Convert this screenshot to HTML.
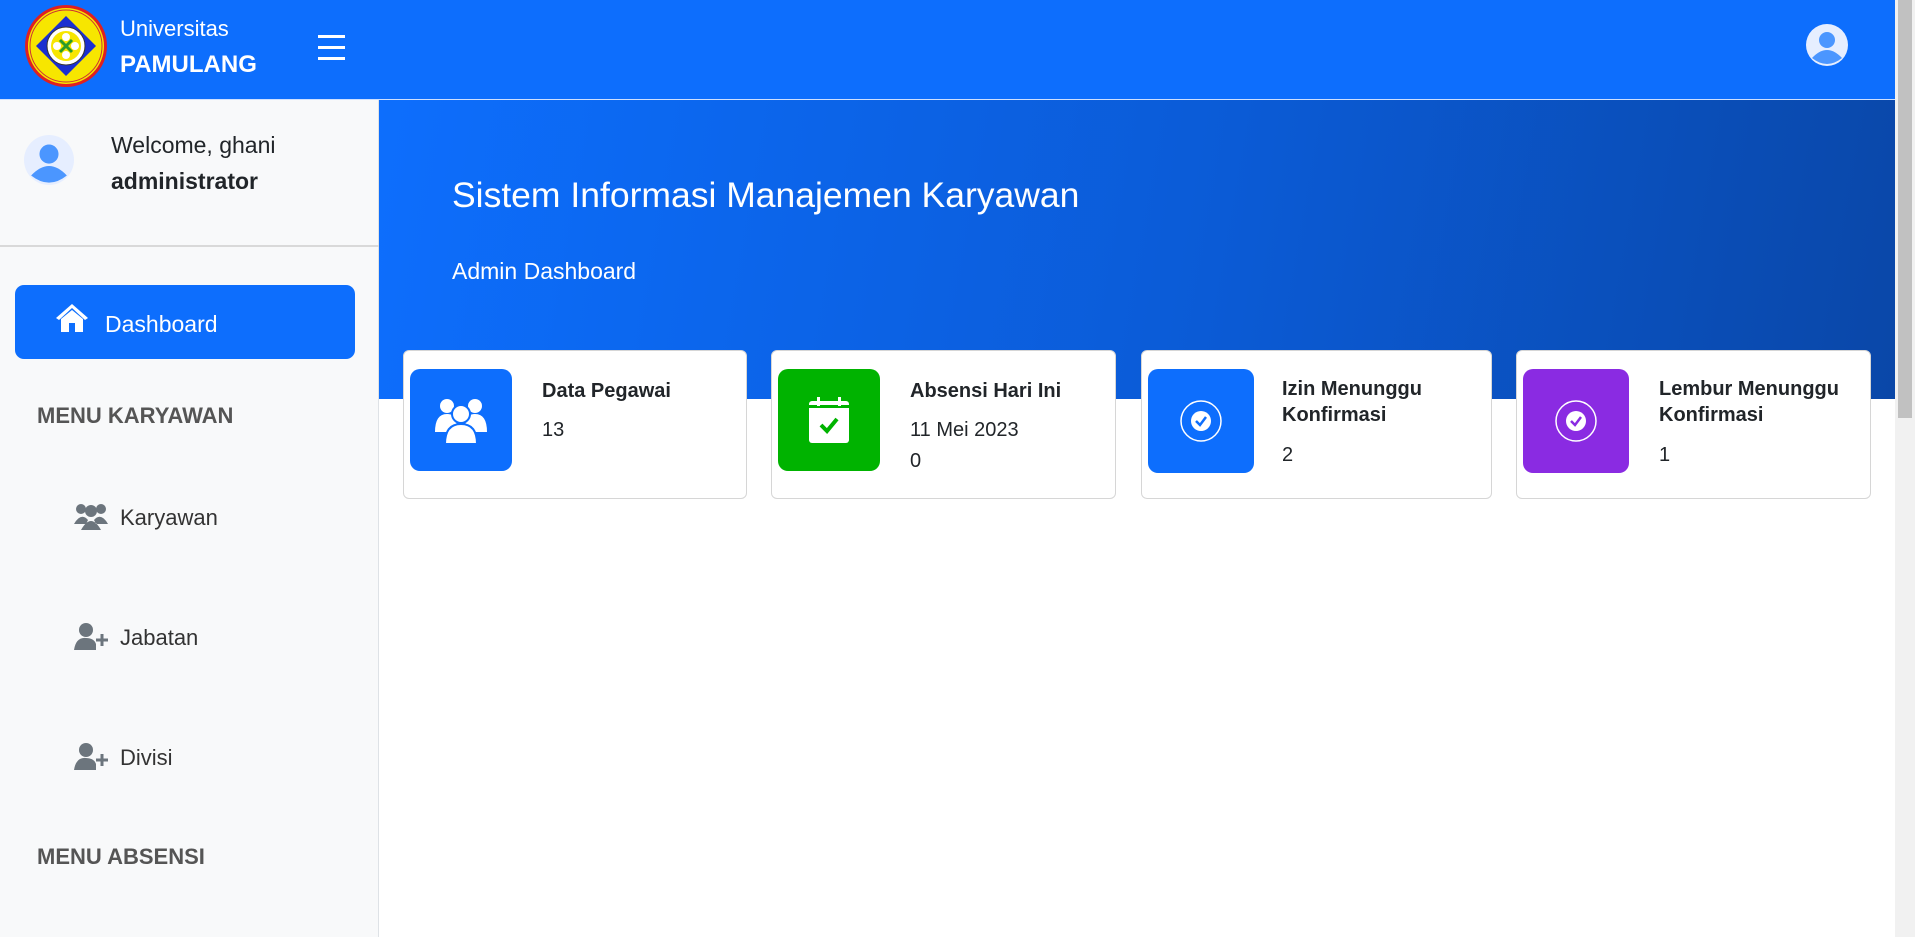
<!DOCTYPE html>
<html><head><meta charset="utf-8"><style>
*{box-sizing:border-box;margin:0;padding:0}
body{width:1915px;height:937px;overflow:hidden;font-family:"Liberation Sans",sans-serif;background:#fff;position:relative;color:#212529}
.hdr{position:absolute;left:0;top:0;width:1895px;height:100px;background:#0d6efd;border-bottom:1px solid #cfe0ff}
.sb{position:absolute;left:0;top:100px;width:379px;height:837px;background:#f8f9fa;border-right:1px solid #dee2e6}
.hero{position:absolute;left:379px;top:100px;width:1516px;height:299px;background:linear-gradient(100deg,#0d6efd 0%,#0b5bd6 55%,#0a47a8 100%)}
.scroll{position:absolute;left:1895px;top:0;width:20px;height:937px;background:#f1f1f1}
.thumb{position:absolute;left:1898px;top:0;width:14px;height:418px;background:#c1c1c1}
.card{position:absolute;top:350px;height:149px;background:#fff;border:1px solid #d6d6d6;border-radius:6px}
.ic{position:absolute;left:6px;top:18px;width:102px;height:102px;border-radius:10px;display:flex;align-items:center;justify-content:center}
.t{position:absolute;font-size:20px;color:#212529}
.b{font-weight:bold}
.menu{position:absolute;left:37px;font-size:22px;font-weight:bold;color:#555}
.item{position:absolute;left:120px;font-size:22px;color:#333}
</style></head><body>
<div class="hdr">
 <svg style="position:absolute;left:24px;top:4px" width="84" height="84" viewBox="0 0 84 84">
  <circle cx="42" cy="42" r="41" fill="#e02020"/><circle cx="42" cy="42" r="38" fill="#f7e600"/>
  <circle cx="42" cy="42" r="36" fill="none" stroke="#c33" stroke-width="1"/>
  <polygon points="42,12 72,42 42,72 12,42" fill="#1a2fd0"/>
  <circle cx="42" cy="42" r="19" fill="#fff" stroke="#333"/>
  <circle cx="42" cy="42" r="15" fill="#f7e600"/>
  <circle cx="42" cy="33" r="4" fill="#fff"/><circle cx="42" cy="51" r="4" fill="#fff"/><circle cx="33" cy="42" r="4" fill="#fff"/><circle cx="51" cy="42" r="4" fill="#fff"/>
  <path d="M36 36 L48 48 M48 36 L36 48" stroke="#2a9a2a" stroke-width="3"/>
 </svg>
 <div style="position:absolute;left:120px;top:16px;color:#fff;font-size:22px">Universitas</div>
 <div style="position:absolute;left:120px;top:51px;color:#fff;font-size:24px;font-weight:bold">PAMULANG</div>
 <div style="position:absolute;left:318px;top:35px;width:27px">
  <div style="height:3px;background:#fff;margin-bottom:8px"></div><div style="height:3px;background:#fff;margin-bottom:8px"></div><div style="height:3px;background:#fff"></div>
 </div>
 <svg style="position:absolute;left:1806px;top:24px" width="42" height="42" viewBox="0 0 42 42"><circle cx="21" cy="21" r="21" fill="#e6eeff"/><circle cx="21" cy="16" r="8" fill="#4b96ff"/><path d="M6 34 Q21 18 36 34 Q21 46 6 34Z" fill="#4b96ff"/></svg>
</div>
<div class="sb">
 <svg style="position:absolute;left:24px;top:35px" width="50" height="50" viewBox="0 0 42 42"><circle cx="21" cy="21" r="21" fill="#e6eeff"/><circle cx="21" cy="16" r="8" fill="#4b96ff"/><path d="M6 34 Q21 18 36 34 Q21 46 6 34Z" fill="#4b96ff"/></svg>
 <div style="position:absolute;left:111px;top:32px;font-size:23px">Welcome, ghani</div>
 <div style="position:absolute;left:111px;top:68px;font-size:23px;font-weight:bold">administrator</div>
 <div style="position:absolute;left:0;top:145px;width:379px;height:2px;background:#d9d9d9"></div>
 <div style="position:absolute;left:15px;top:185px;width:340px;height:74px;background:#0d6efd;border-radius:9px">
  <svg style="position:absolute;left:40px;top:18px" width="34" height="30" viewBox="0 0 34 30"><path d="M17 1 L1 15 L4 17 L17 5 L30 17 L33 15Z M6 16 L6 29 L14 29 L14 20 L20 20 L20 29 L28 29 L28 16 L17 7Z" fill="#fff"/></svg>
  <div style="position:absolute;left:90px;top:26px;color:#fff;font-size:23px">Dashboard</div>
 </div>
 <div class="menu" style="top:303px">MENU KARYAWAN</div>
 <svg style="position:absolute;left:74px;top:402px" width="34" height="28" viewBox="0 0 34 28"><circle cx="7" cy="7" r="5" fill="#6c757d"/><circle cx="27" cy="7" r="5" fill="#6c757d"/><circle cx="17" cy="9" r="6" fill="#6c757d"/><path d="M0 22 Q7 10 14 18 L12 22Z M34 22 Q27 10 20 18 L22 22Z M7 28 Q17 10 27 28Z" fill="#6c757d"/></svg>
 <div class="item" style="top:405px">Karyawan</div>
 <svg style="position:absolute;left:74px;top:522px" width="34" height="28" viewBox="0 0 34 28"><circle cx="12" cy="8" r="7" fill="#6c757d"/><path d="M0 28 Q2 15 12 16 Q20 16 22 22 L22 28Z" fill="#6c757d"/><path d="M22 18h12M28 12v12" stroke="#6c757d" stroke-width="3"/></svg>
 <div class="item" style="top:525px">Jabatan</div>
 <svg style="position:absolute;left:74px;top:642px" width="34" height="28" viewBox="0 0 34 28"><circle cx="12" cy="8" r="7" fill="#6c757d"/><path d="M0 28 Q2 15 12 16 Q20 16 22 22 L22 28Z" fill="#6c757d"/><path d="M22 18h12M28 12v12" stroke="#6c757d" stroke-width="3"/></svg>
 <div class="item" style="top:645px">Divisi</div>
 <div class="menu" style="top:744px">MENU ABSENSI</div>
</div>
<div class="hero">
 <div style="position:absolute;left:73px;top:75px;color:#fff;font-size:35.5px">Sistem Informasi Manajemen Karyawan</div>
 <div style="position:absolute;left:73px;top:158px;color:#fff;font-size:23px">Admin Dashboard</div>
</div>
<div class="card" style="left:403px;width:344px">
 <div class="ic" style="background:#0d6efd"><svg width="56" height="48" viewBox="0 0 56 48"><g fill="#fff"><circle cx="14" cy="10" r="7"/><circle cx="42" cy="10" r="7"/><path d="M2 36 Q2 18 14 18 Q22 18 24 26 L20 36Z M54 36 Q54 18 42 18 Q34 18 32 26 L36 36Z"/><circle cx="28" cy="18" r="9" stroke="#0d6efd" stroke-width="2"/><path d="M12 48 Q12 28 28 28 Q44 28 44 48Z" stroke="#0d6efd" stroke-width="2"/></g></svg></div>
 <div class="t b" style="left:138px;top:29px">Data Pegawai</div>
 <div class="t" style="left:138px;top:68px">13</div>
</div>
<div class="card" style="left:771px;width:345px">
 <div class="ic" style="background:#00b300"><svg width="40" height="46" viewBox="0 0 40 46"><rect x="0" y="4" width="40" height="42" rx="3" fill="#fff"/><rect x="0" y="8" width="40" height="3" fill="#00b300"/><rect x="8" y="0" width="3" height="9" fill="#fff"/><rect x="29" y="0" width="3" height="9" fill="#fff"/><path d="M12 28 L18 34 L28 22" stroke="#00b300" stroke-width="4" fill="none"/></svg></div>
 <div class="t b" style="left:138px;top:29px">Absensi Hari Ini</div>
 <div class="t" style="left:138px;top:68px">11 Mei 2023</div>
 <div class="t" style="left:138px;top:99px">0</div>
</div>
<div class="card" style="left:1141px;width:351px">
 <div class="ic" style="background:#0d6efd;width:106px;height:104px"><svg width="44" height="44" viewBox="0 0 44 44"><circle cx="22" cy="22" r="20" fill="none" stroke="#fff" stroke-width="1.5"/><circle cx="22" cy="22" r="10" fill="#fff"/><path d="M17 22 L21 26 L27 18" stroke="#0d6efd" stroke-width="2.5" fill="none"/></svg></div>
 <div class="t b" style="left:140px;top:27px">Izin Menunggu</div>
 <div class="t b" style="left:140px;top:53px">Konfirmasi</div>
 <div class="t" style="left:140px;top:93px">2</div>
</div>
<div class="card" style="left:1516px;width:355px">
 <div class="ic" style="background:#8a2be2;width:106px;height:104px"><svg width="44" height="44" viewBox="0 0 44 44"><circle cx="22" cy="22" r="20" fill="none" stroke="#fff" stroke-width="1.5"/><circle cx="22" cy="22" r="10" fill="#fff"/><path d="M17 22 L21 26 L27 18" stroke="#8a2be2" stroke-width="2.5" fill="none"/></svg></div>
 <div class="t b" style="left:142px;top:27px">Lembur Menunggu</div>
 <div class="t b" style="left:142px;top:53px">Konfirmasi</div>
 <div class="t" style="left:142px;top:93px">1</div>
</div>
<div class="scroll"></div><div class="thumb"></div>
</body></html>
